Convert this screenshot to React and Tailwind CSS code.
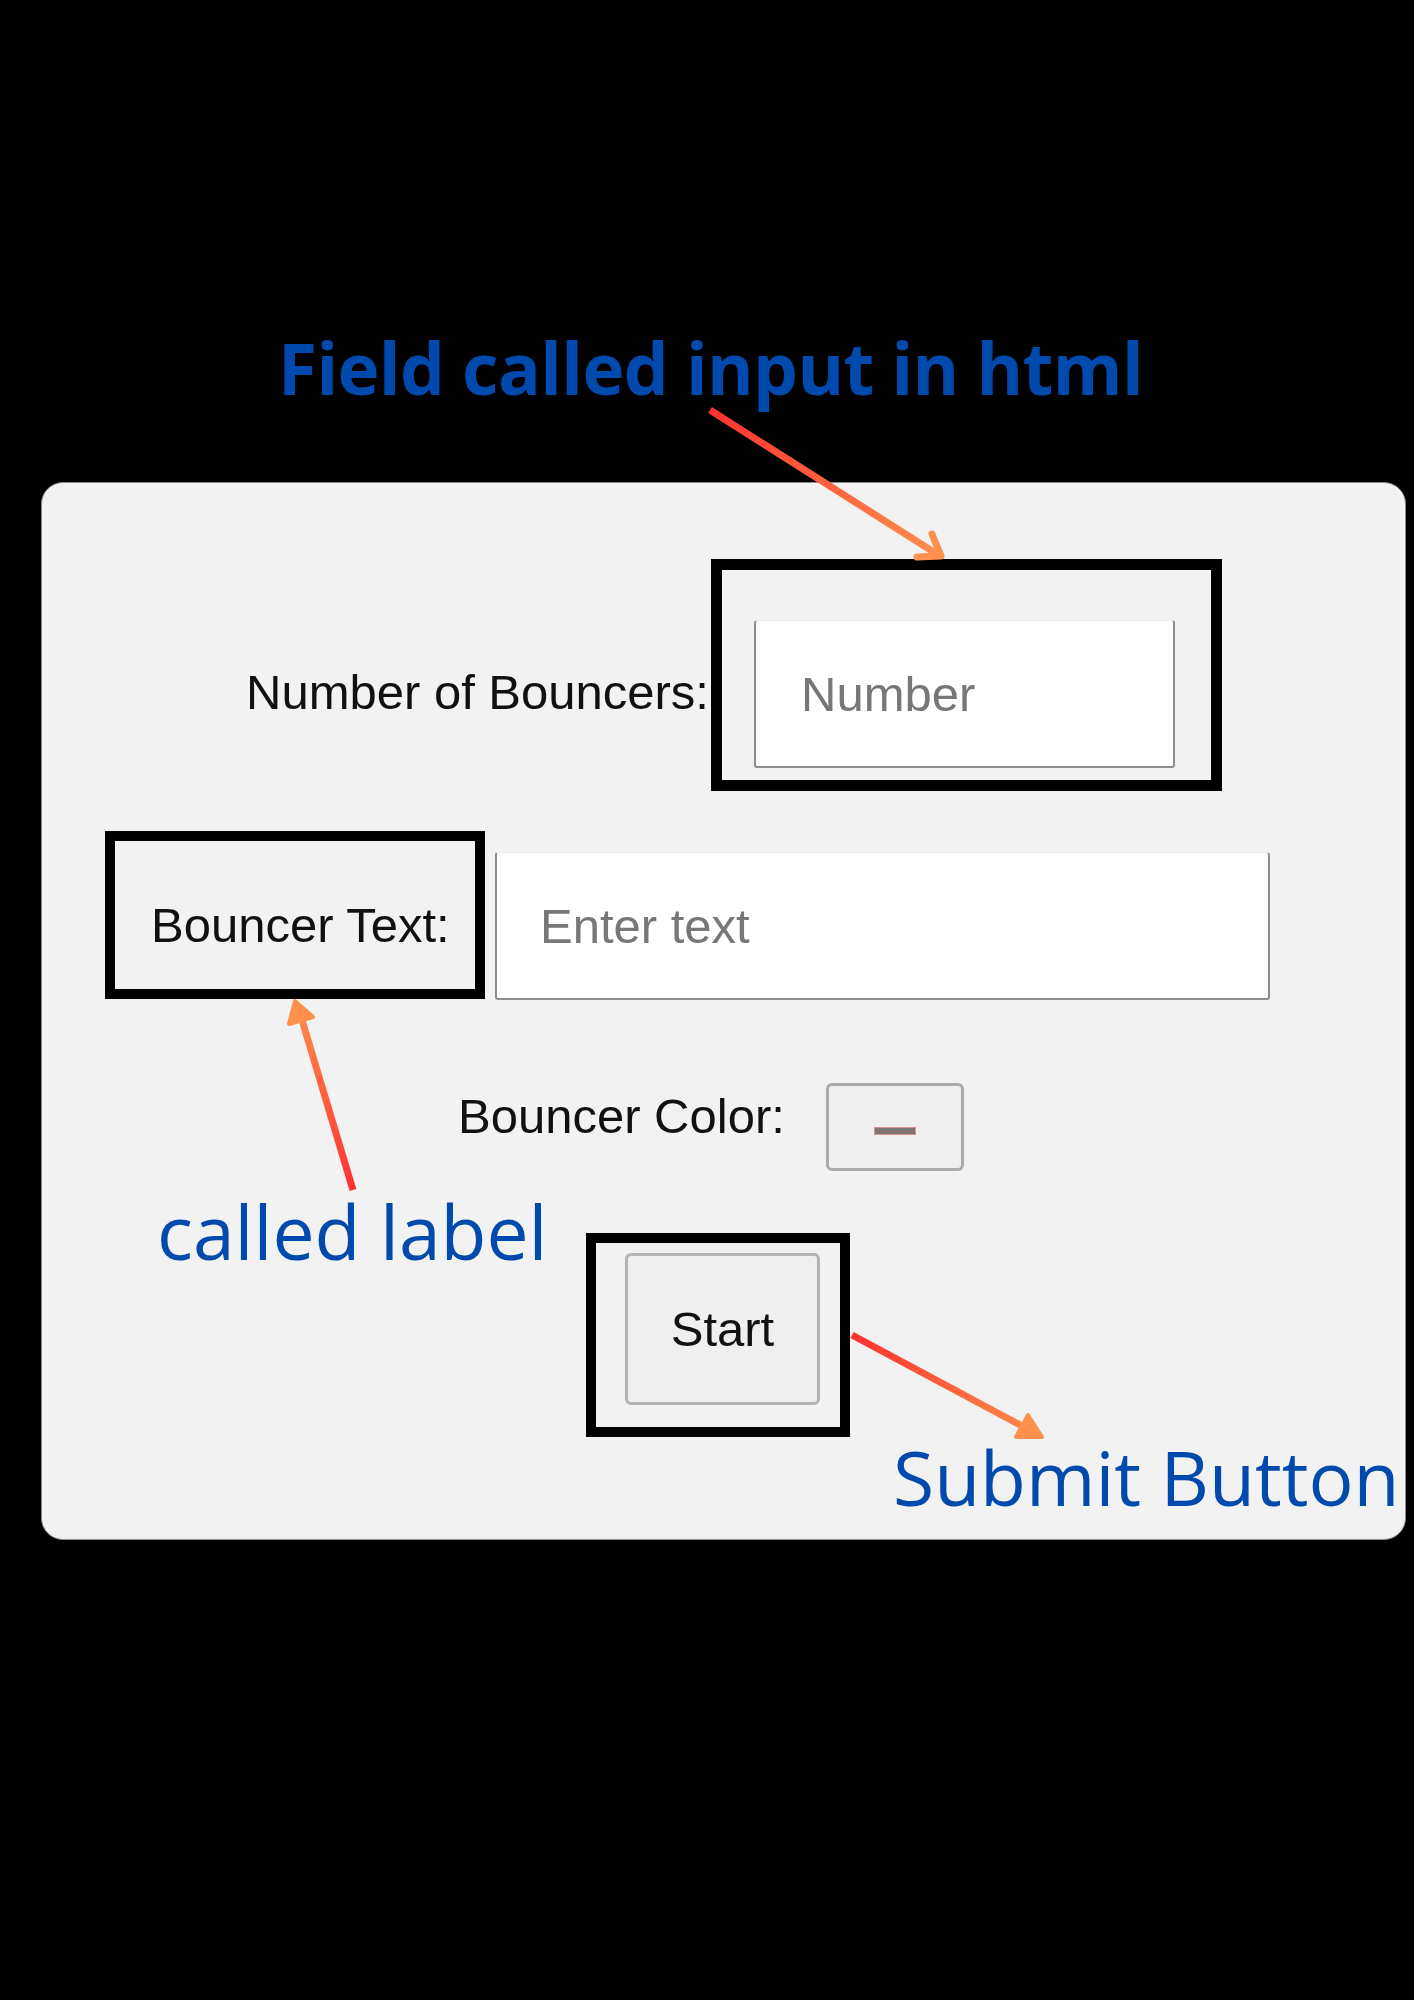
import React from 'react';

const Arrows = () => (
  <svg className="absolute inset-0 pointer-events-none" width="1414" height="2000" viewBox="0 0 1414 2000">
    <defs>
      <linearGradient id="g1" gradientUnits="userSpaceOnUse" x1="710" y1="410" x2="942" y2="557">
        <stop offset="0" stopColor="#ff3131" />
        <stop offset="1" stopColor="#ff914d" />
      </linearGradient>
      <linearGradient id="g2" gradientUnits="userSpaceOnUse" x1="353" y1="1190" x2="295" y2="1000">
        <stop offset="0" stopColor="#ff3131" />
        <stop offset="1" stopColor="#ff914d" />
      </linearGradient>
      <linearGradient id="g3" gradientUnits="userSpaceOnUse" x1="852" y1="1335" x2="1043" y2="1437">
        <stop offset="0" stopColor="#ff3131" />
        <stop offset="1" stopColor="#ff914d" />
      </linearGradient>
    </defs>

    {/* input arrow, open head */}
    <line x1="710" y1="410" x2="940" y2="556" stroke="url(#g1)" strokeWidth="7" />
    <polyline points="932,534 941,556 917,557" fill="none" stroke="#ff914d" strokeWidth="7" strokeLinecap="round" strokeLinejoin="round" />

    {/* label arrow */}
    <line x1="353" y1="1190" x2="302" y2="1020" stroke="url(#g2)" strokeWidth="7" />
    <polygon points="295,1001 313,1017 289,1024" fill="#ff914d" stroke="#ff914d" strokeWidth="4" strokeLinejoin="round" />

    {/* button arrow */}
    <line x1="852" y1="1335" x2="1022" y2="1426" stroke="url(#g3)" strokeWidth="7" />
    <polygon points="1042,1437 1016,1437 1028,1415" fill="#ff914d" stroke="#ff914d" strokeWidth="4" strokeLinejoin="round" />
  </svg>
);

export default function App() {
  return (
    <div className="relative w-[1414px] h-[2000px] bg-black overflow-hidden">
      <h1 className="pt-[332px] pl-[7px] text-center font-['Open_Sans',sans-serif] font-bold text-[71px] tracking-[-0.6px] leading-none text-[#004aad]">
        Field called input in html
      </h1>

      <div className="mt-[79px] ml-[41px] w-[1365px] h-[1058px] rounded-[22px] border border-[#8c8c8c] bg-[#f2f2f2] font-['Liberation_Sans',Arial,sans-serif] text-[49px] leading-none text-[#111]">
        {/* Number of bouncers */}
        <div className="flex items-start pl-[204px] pt-[76px]">
          <label className="w-[465px] mt-[109px] whitespace-nowrap">Number of Bouncers:</label>
          <div className="w-[511px] h-[232px] border-[11px] border-black pl-[32px] pt-[50px]">
            <input
              type="number"
              placeholder="Number"
              className="w-[421px] h-[148px] bg-white border-x-2 border-b-2 border-t border-[#8d8d8d] border-t-[#ececec] rounded-[3px] pl-[45px] text-[49px] font-['Liberation_Sans',Arial,sans-serif] placeholder:text-[#777] outline-none"
            />
          </div>
        </div>

        {/* Bouncer text */}
        <div className="flex items-start pl-[63px] mt-[40px]">
          <div className="w-[380px] h-[168px] border-[10px] border-black pl-[36px] pt-[60px]">
            <label className="whitespace-nowrap">Bouncer Text:</label>
          </div>
          <input
            type="text"
            placeholder="Enter text"
            className="ml-[10px] mt-[21px] w-[775px] h-[148px] bg-white border-x-2 border-b-2 border-t border-[#8d8d8d] border-t-[#ececec] rounded-[3px] pl-[43px] text-[49px] font-['Liberation_Sans',Arial,sans-serif] placeholder:text-[#777] outline-none"
          />
        </div>

        {/* Bouncer color */}
        <div className="flex items-start pl-[416px] mt-[83px]">
          <label className="w-[368px] mt-[9px] whitespace-nowrap">Bouncer Color:</label>
          <div className="w-[138px] h-[88px] border-[3px] border-[#ababab] rounded-[6px] bg-[#efefef] flex items-center justify-center pt-[8px]">
            <div className="w-[42px] h-[8px] bg-[#7d7373] border border-[#d98f8f]" />
          </div>
        </div>

        {/* Start + annotation */}
        <div className="flex items-start pl-[115px] mt-[23px]">
          <div className="w-[429px] font-['Open_Sans',sans-serif] text-[75px] leading-none text-[#004aad] whitespace-nowrap">
            called label
          </div>
          <div className="mt-[39px] w-[264px] h-[204px] border-[10px] border-black pl-[29px] pt-[10px]">
            <button
              type="submit"
              className="w-[195px] h-[152px] border-[3px] border-[#b3b3b3] rounded-[6px] bg-[#efefef] text-[49px] leading-none text-[#111]"
            >
              Start
            </button>
          </div>
        </div>

        <div className="pl-[851px] mt-[3px] font-['Open_Sans',sans-serif] text-[75px] leading-none text-[#004aad] whitespace-nowrap">
          Submit Button
        </div>
      </div>

      <Arrows />
    </div>
  );
}
